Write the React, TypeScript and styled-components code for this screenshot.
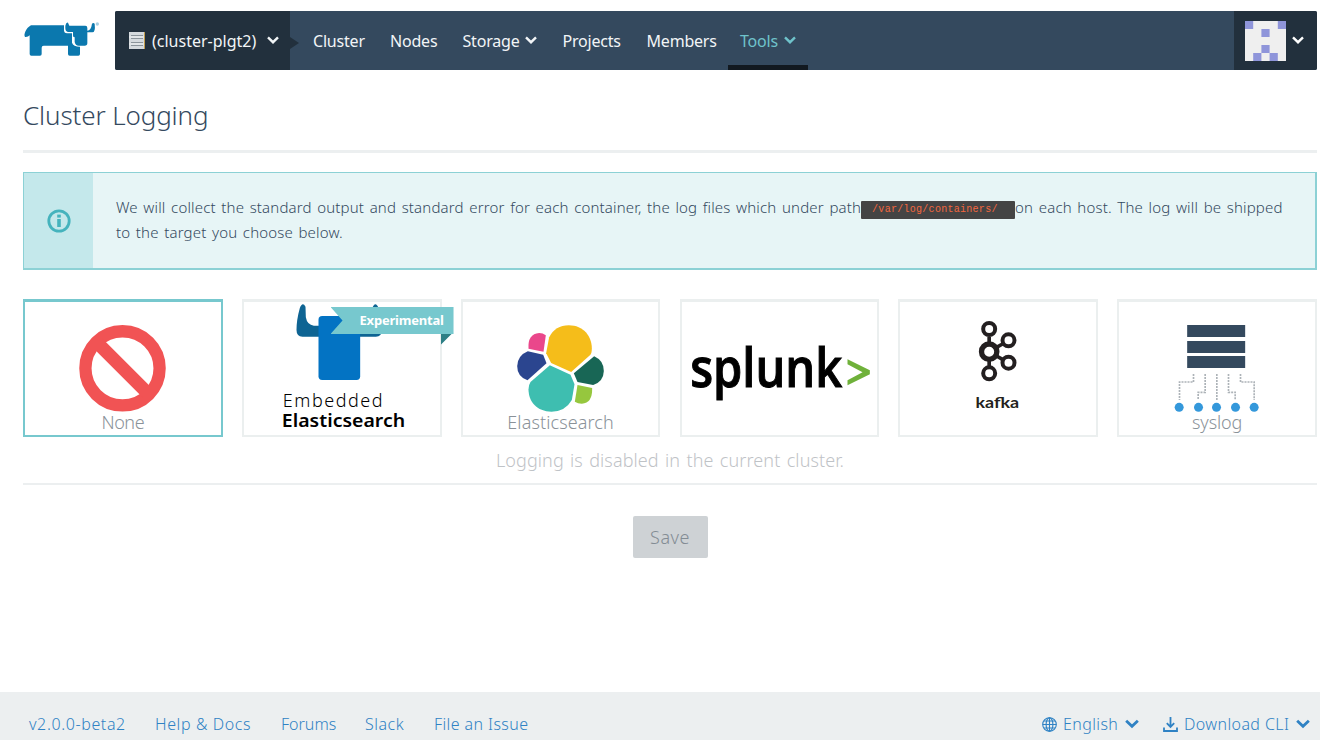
import React from 'react';
import styled, { createGlobalStyle } from 'styled-components';

const GlobalStyle = createGlobalStyle`
  *, *::before, *::after { box-sizing: border-box; }
  body {
    margin: 0;
    background: #fff;
    color: #34495e;
    font-family: "Noto Sans", "Open Sans", sans-serif;
    font-weight: 300;
  }
  svg { display: block; flex: none; }
`;

const Page = styled.div`
  display: flex;
  flex-direction: column;
  height: 740px;
  overflow: hidden;
`;

/* ---------- header ---------- */
const Header = styled.header`
  display: flex;
  height: 70px;
  padding: 11px 3px 0 23px;
`;

const LogoLink = styled.a`
  width: 92px;
  padding-top: 9px;
`;

const NavBar = styled.nav`
  flex: 1;
  display: flex;
  height: 59px;
  background: #34495e;
  border-radius: 2px;
  overflow: hidden;
`;

const ClusterSwitcher = styled.div`
  position: relative;
  display: flex;
  align-items: center;
  width: 175px;
  padding-left: 14px;
  background: #22303d;
  color: #f2f5f7;
  font-size: 16px;
  font-weight: 400;

  &::after {
    content: "";
    position: absolute;
    left: 100%;
    top: 26px;
    border: solid transparent;
    border-width: 6px 0 6px 9px;
    border-left-color: #22303d;
  }
`;

const ClusterName = styled.span`
  width: 105px;
  margin: 0 10px 0 7px;
  white-space: nowrap;
`;

const NavList = styled.div`
  display: flex;
  flex: 1;
  padding-left: 11px;
`;

const NavItem = styled.a<{ $width: number; $active?: boolean }>`
  display: flex;
  align-items: center;
  gap: 6px;
  width: ${p => p.$width}px;
  padding-left: 12px;
  border-bottom: 5px solid ${p => (p.$active ? '#121920' : 'transparent')};
  padding-top: 5px;
  color: ${p => (p.$active ? '#6fc3cb' : '#f2f5f7')};
  font-size: 16px;
  font-weight: 400;
  letter-spacing: -0.2px;
  white-space: nowrap;
`;

const UserMenu = styled.div`
  display: flex;
  align-items: center;
  gap: 6px;
  width: 83px;
  padding-left: 11px;
  background: #22303d;
  color: #fff;
`;

/* ---------- main ---------- */
const Main = styled.main`
  flex: 1;
  padding: 0 3px 0 23px;
`;

const TitleBar = styled.div`
  height: 83px;
  padding-top: 27px;
  border-bottom: 3px solid #eceff0;
`;

const Title = styled.h1`
  margin: 0;
  font-size: 26px;
  font-weight: 300;
  line-height: 36px;
  letter-spacing: -0.12px;
`;

const Banner = styled.section`
  display: flex;
  height: 98px;
  margin-top: 19px;
  border: solid #8cd1d5;
  border-width: 1px 2px 2px 1px;
  background: #e7f5f6;
`;

const BannerIcon = styled.div`
  display: flex;
  align-items: center;
  justify-content: center;
  width: 69px;
  background: #c4e8eb;
`;

const BannerText = styled.p`
  flex: 1;
  margin: 0;
  padding: 22px 0 0 23px;
  font-size: 15px;
  line-height: 25px;
  letter-spacing: 0.16px;
  word-spacing: 1.5px;
  white-space: nowrap;
`;

const Code = styled.code`
  display: inline-block;
  width: 154px;
  height: 18px;
  padding-left: 11px;
  border-radius: 1px;
  background: #444;
  color: #f2673f;
  font: 400 10px/18px "Liberation Mono", monospace;
  letter-spacing: 0.28px;
  vertical-align: 1px;
`;

const Targets = styled.div`
  display: grid;
  grid-template-columns: repeat(6, 1fr);
  column-gap: 19.2px;
  margin-top: 29px;
`;

const Card = styled.button<{ $selected?: boolean }>`
  position: relative;
  display: grid;
  height: 138px;
  padding: 0;
  border: solid ${p => (p.$selected ? '#77c8ce' : '#ebefef')};
  border-width: 3px 2px 2px;
  background: #fff;
  font-family: inherit;

  > svg {
    grid-area: 1 / 1;
    width: 100%;
    height: 133px;
  }
`;

const CardLabel = styled.span<{ $spacing?: number }>`
  grid-area: 1 / 1;
  align-self: end;
  justify-self: center;
  color: #8a9299;
  font-size: 18px;
  font-weight: 300;
  line-height: 26px;
  letter-spacing: ${p => p.$spacing ?? 0}px;
`;

const Ribbon = styled.span`
  position: absolute;
  top: 5px;
  right: -14px;
  width: 123px;
  height: 27px;
  padding-left: 29px;
  background: linear-gradient(#77c8ce, #77c8ce);
  clip-path: polygon(0 0, 100% 0, 100% 27px, 121px 27px, 110px 38px, 110px 27px, 0 27px, 12px 13.5px);
  color: #fff;
  font-size: 13px;
  font-weight: 700;
  line-height: 27px;
  letter-spacing: -0.2px;
  text-align: left;

  &::after {
    content: "";
    position: absolute;
    top: 27px;
    right: 0;
    width: 13px;
    height: 11px;
    background: #2e7f85;
  }
`;

const Status = styled.p`
  margin: 0;
  height: 48px;
  padding-top: 10px;
  border-bottom: 2px solid #eceff0;
  color: #bfc3c7;
  font-size: 18px;
  line-height: 27px;
  letter-spacing: 0.1px;
  word-spacing: 1.5px;
  text-align: center;
`;

const Actions = styled.div`
  display: flex;
  justify-content: center;
  margin-top: 31px;
`;

const SaveButton = styled.button`
  width: 75px;
  height: 42px;
  padding: 0;
  border: 0;
  border-radius: 2px;
  background: #ced2d5;
  color: #838c94;
  font: 300 18px/42px "Noto Sans", sans-serif;
  letter-spacing: 0.5px;
`;

/* ---------- footer ---------- */
const Footer = styled.footer`
  display: flex;
  justify-content: space-between;
  height: 48px;
  padding: 0 10px 0 29px;
  background: #eceff0;
  color: #2f82c4;
  font-size: 16px;
  line-height: 64px;
  white-space: nowrap;
`;

const FooterGroup = styled.div<{ $gap: number }>`
  display: flex;
  align-items: center;
  height: 64px;
  gap: ${p => p.$gap}px;
`;

const FooterLink = styled.a<{ $width: number; $spacing: number }>`
  width: ${p => p.$width}px;
  letter-spacing: ${p => p.$spacing}px;
`;

const FooterMenu = styled.span`
  display: flex;
  align-items: center;
  gap: 6px;
`;

/* ---------- drawings ---------- */
function Chevron({ width = 12, stroke = 2.4 }: { width?: number; stroke?: number }) {
  return (
    <svg width={width} height={width * 0.67} viewBox="0 0 12 8" fill="none" stroke="currentColor" strokeWidth={stroke}>
      <path d="M1 1.4 L6 6.2 L11 1.4" />
    </svg>
  );
}

function RancherLogo() {
  return (
    <svg width="78" height="37" viewBox="69 60 234 111" fill="#0b78ae">
      <path d="M75 111 C70 104 78 84 93 76 H192 V93 Q193 100 201 100 H216 V128 Q220 140 240 140 V162 Q240 167 235 167 H209 Q204 167 204 162 V137 H131 Q125 137 125 143 V162 Q125 167 120 167 H94 Q89 167 89 162 V106 Q84 112 75 111Z" />
      <path d="M196 77 Q199 66 204 68 L208 77 H256 Q262 77 262 84 V92 Q273 92 276 71 Q280 67 284 71 Q287 97 277 97 L262 97 V130 Q262 137 254 137 H236 Q226 137 224 126 V112 Q218 112 219 106 V96 H204 Q196 95 196 84Z" />
      <circle cx="292" cy="72" r="5" fill="#a9cfe2" />
    </svg>
  );
}

function ClusterIcon() {
  return (
    <svg width="16" height="17" viewBox="0 0 16 17">
      <rect width="16" height="17" fill="#d5dade" />
      <path d="M2 3.5H14M2 6.5H14M2 10.5H14M2 13.5H14" stroke="#8b949b" strokeWidth="1" />
      <path d="M0 5H16M0 12H16" stroke="#eef0f1" strokeWidth="1" />
      <path d="M15.5 0V17" stroke="#c39d4c" strokeWidth="1" />
    </svg>
  );
}

const AVATAR_CELLS = [[0, 0], [4, 0], [2, 1], [2, 3], [1, 4], [3, 4]];

function Avatar() {
  return (
    <svg width="41" height="40" viewBox="0 0 5 5" preserveAspectRatio="none">
      <rect width="5" height="5" fill="#efefef" />
      {AVATAR_CELLS.map(([x, y]) => (
        <rect key={`${x}${y}`} x={x} y={y} width="1" height="1" fill="#8f95da" />
      ))}
    </svg>
  );
}

function InfoIcon() {
  return (
    <svg width="24" height="24" viewBox="0 0 24 24" fill="none" stroke="#45b3bd">
      <circle cx="12" cy="12" r="10.2" strokeWidth="2.8" />
      <path d="M12 10V18" strokeWidth="3.6" />
      <path d="M12 5.6V8.6" strokeWidth="3.6" />
    </svg>
  );
}

function NoneArt() {
  return (
    <svg viewBox="45 36 588 399" fill="none" stroke="#f15354">
      <circle cx="338" cy="235" r="111.5" strokeWidth="37" />
      <path d="M264 160 L412 308" strokeWidth="40" />
    </svg>
  );
}

function EmbeddedArt() {
  const horn = 'M184 120 Q184 90 194 54 Q202 34 211 50 L212 82 Q216 105 236 107 H260 V140 H202 Q184 140 184 120Z';
  return (
    <svg viewBox="27 36 586 399">
      <path d={horn} fill="#0e6493" />
      <path d={horn} fill="#0e6493" transform="translate(624 0) scale(-1 1)" />
      <rect x="250" y="78" width="125" height="192" rx="11" fill="#0373c3" />
      <g fontFamily="Noto Sans" fill="#000">
        <text x="143" y="350" fontSize="54" fontWeight="300" textLength="299">Embedded</text>
        <text x="140" y="410" fontSize="55" fontWeight="600" textLength="370" lengthAdjust="spacingAndGlyphs">Elasticsearch</text>
      </g>
    </svg>
  );
}

function ElasticArt() {
  return (
    <svg viewBox="24 36 586 399">
      <path fill="#f5bd1a" d="M282 142 Q300 106 341 106 C385 106 410 140 410 175 Q410 190 405 195 L348 246 L288 219 L273 190Z" />
      <path fill="#ea478b" d="M220 176 Q217 132 252 129 Q263 129 272 136 L265 185Z" />
      <path fill="#2b458f" d="M218 184 L264 194 L274 220 L217 271 Q186 260 186 228 Q188 196 218 184Z" />
      <path fill="#3ebeb0" d="M284 226 L346 254 L358 283 L350 330 Q330 365 289 365 C245 365 220 335 220 298 Q220 285 226 276Z" />
      <path fill="#186655" d="M417 199 Q446 212 446 243 Q445 275 414 285 L367 276 L356 250Z" />
      <path fill="#96c73e" d="M367 285 L411 294 Q412 340 380 341 Q368 341 359 335Z" />
    </svg>
  );
}

function SplunkArt() {
  return (
    <svg viewBox="36 36 586 399">
      <text x="60" y="290" fontFamily="Open Sans" fontWeight="600" fontSize="160" fill="#000" stroke="#000" strokeWidth="3" textLength="456" lengthAdjust="spacingAndGlyphs">splunk</text>
      <path fill="#6fb13a" d="M532 208 L599 241 V253 L532 286 V271 L577 247 L532 223Z" />
    </svg>
  );
}

function KafkaArt() {
  return (
    <svg viewBox="33 36 586 399" fill="none" stroke="#231f20">
      <path d="M300 140V160M300 210V230M322 172L340 162M322 198L340 208" strokeWidth="11" />
      <circle cx="300" cy="117" r="18" strokeWidth="12" />
      <circle cx="300" cy="185" r="23" strokeWidth="16" />
      <circle cx="300" cy="250" r="18" strokeWidth="12" />
      <circle cx="358" cy="151" r="18" strokeWidth="12" />
      <circle cx="358" cy="218" r="18" strokeWidth="12" />
      <text x="259" y="353" fontFamily="Lato" fontWeight="700" fontSize="47" fill="#231f20" stroke="none" textLength="131" lengthAdjust="spacingAndGlyphs">kafka</text>
    </svg>
  );
}

function SyslogArt() {
  return (
    <svg viewBox="42 36 586 399">
      <path d="M246 123H420M246 171H420M246 216H420" stroke="#34495e" strokeWidth="36" />
      <path
        d="M265 252V276H223V330M300 252V307H279V330M335 252V330M370 252V307H390V330M406 252V276H447V330"
        fill="none"
        stroke="#adb3b8"
        strokeWidth="5"
        strokeDasharray="6 3"
      />
      {[222, 280, 334, 391, 447].map(x => (
        <circle key={x} cx={x} cy="352" r="13.5" fill="#3498db" />
      ))}
    </svg>
  );
}

function GlobeIcon() {
  return (
    <svg width="15" height="15" viewBox="0 0 15 15" fill="none" stroke="currentColor" strokeWidth="1.1">
      <circle cx="7.5" cy="7.5" r="6.8" />
      <ellipse cx="7.5" cy="7.5" rx="3.4" ry="6.8" />
      <path d="M7.5 .7V14.3M.7 7.5H14.3M1.8 4H13.2M1.8 11H13.2" />
    </svg>
  );
}

function DownloadIcon() {
  return (
    <svg width="15" height="15" viewBox="0 0 15 15" fill="none" stroke="currentColor" strokeWidth="1.8">
      <path d="M7.5 0V10M3.8 6.2L7.5 9.9L11.2 6.2M1 10.5V14H14V10.5" />
    </svg>
  );
}

export default function App() {
  return (
    <Page>
      <GlobalStyle />
      <Header>
        <LogoLink><RancherLogo /></LogoLink>
        <NavBar>
          <ClusterSwitcher>
            <ClusterIcon />
            <ClusterName>(cluster-plgt2)</ClusterName>
            <Chevron />
          </ClusterSwitcher>
          <NavList>
            <NavItem $width={77}>Cluster</NavItem>
            <NavItem $width={72.5}>Nodes</NavItem>
            <NavItem $width={100}>Storage <Chevron /></NavItem>
            <NavItem $width={84}>Projects</NavItem>
            <NavItem $width={93.5}>Members</NavItem>
            <NavItem $width={80} $active>Tools <Chevron /></NavItem>
          </NavList>
          <UserMenu>
            <Avatar />
            <Chevron />
          </UserMenu>
        </NavBar>
      </Header>

      <Main>
        <TitleBar><Title>Cluster Logging</Title></TitleBar>
        <Banner>
          <BannerIcon><InfoIcon /></BannerIcon>
          <BannerText>
            We will collect the standard output and standard error for each container, the log files which under path
            <Code>/var/log/containers/</Code>on each host. The log will be shipped
            <br />
            to the target you choose below.
          </BannerText>
        </Banner>

        <Targets>
          <Card $selected><NoneArt /><CardLabel $spacing={-0.4}>None</CardLabel></Card>
          <Card><EmbeddedArt /><Ribbon>Experimental</Ribbon></Card>
          <Card><ElasticArt /><CardLabel $spacing={0.1}>Elasticsearch</CardLabel></Card>
          <Card><SplunkArt /></Card>
          <Card><KafkaArt /></Card>
          <Card><SyslogArt /><CardLabel $spacing={-0.1}>syslog</CardLabel></Card>
        </Targets>

        <Status>Logging is disabled in the current cluster.</Status>
        <Actions><SaveButton disabled>Save</SaveButton></Actions>
      </Main>

      <Footer>
        <FooterGroup $gap={29}>
          <FooterLink $width={97} $spacing={0.62}>v2.0.0-beta2</FooterLink>
          <FooterLink $width={97} $spacing={0.6}>Help &amp; Docs</FooterLink>
          <FooterLink $width={55} $spacing={0}>Forums</FooterLink>
          <FooterLink $width={40} $spacing={0.5}>Slack</FooterLink>
          <FooterLink $width={95} $spacing={0.4}>File an Issue</FooterLink>
        </FooterGroup>
        <FooterGroup $gap={24}>
          <FooterMenu><GlobeIcon /><FooterLink $width={56} $spacing={0.4}>English</FooterLink><Chevron width={14} /></FooterMenu>
          <FooterMenu><DownloadIcon /><FooterLink $width={106} $spacing={0.4}>Download CLI</FooterLink><Chevron width={14} /></FooterMenu>
        </FooterGroup>
      </Footer>
    </Page>
  );
}
